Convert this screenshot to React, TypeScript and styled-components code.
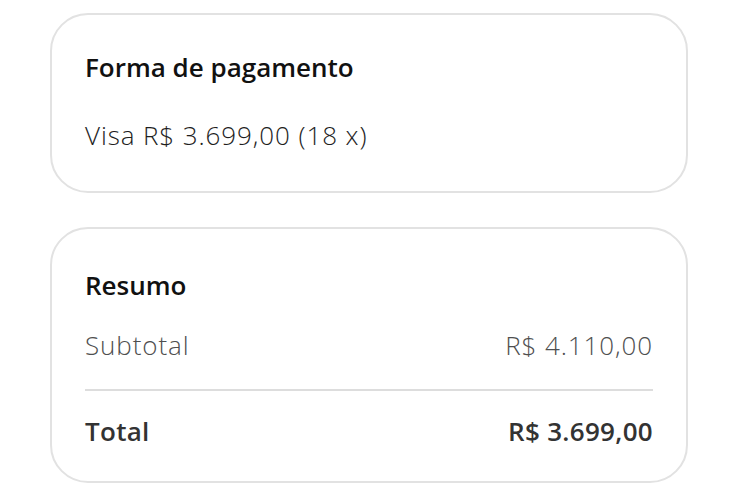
import styled, { createGlobalStyle } from 'styled-components';

const GlobalStyle = createGlobalStyle`
  body {
    margin: 0;
    background: #ffffff;
    font-family: 'Open Sans', 'Noto Sans', sans-serif;
  }
`;

const summary = [
  { label: 'Subtotal', value: 'R$ 4.110,00' },
];

const App = () => {
  return (
    <Page>
      <GlobalStyle />
      <Card $pad="36px 33px 40px">
        <Title>Forma de pagamento</Title>
        <Text $top={36}>Visa R$ 3.699,00 (18 x)</Text>
      </Card>
      <Card $pad="40px 33px 34px">
        <Title>Resumo</Title>
        {summary.map(item => (
          <Row key={item.label} $top={28}>
            <Text $muted>{item.label}</Text>
            <Text $muted>{item.value}</Text>
          </Row>
        ))}
        <Divider />
        <Row>
          <Strong>Total</Strong>
          <Strong>R$ 3.699,00</Strong>
        </Row>
      </Card>
    </Page>
  );
};

export default App;

const Page = styled.div`
  display: flex;
  flex-direction: column;
  gap: 34px;
  padding: 13px 50px;
`;

const Card = styled.section<{ $pad: string }>`
  display: flex;
  flex-direction: column;
  border: 2px solid #e2e2e2;
  border-radius: 38px;
  padding: ${p => p.$pad};
`;

const Title = styled.h2`
  margin: 0;
  font-size: 26px;
  line-height: 32px;
  font-weight: 600;
  color: #111111;
`;

const Text = styled.div<{ $top?: number; $muted?: boolean }>`
  margin-top: ${p => p.$top ?? 0}px;
  font-size: 26px;
  line-height: 32px;
  font-weight: 300;
  letter-spacing: 0.9px;
  color: ${p => (p.$muted ? '#4f4f4f' : '#1e1e1e')};
`;

const Row = styled.div<{ $top?: number }>`
  display: flex;
  justify-content: space-between;
  align-items: center;
  margin-top: ${p => p.$top ?? 0}px;
`;

const Divider = styled.hr`
  margin: 28px 0 24px;
  border: none;
  border-top: 2px solid #dddddd;
`;

const Strong = styled.div`
  font-size: 26px;
  line-height: 32px;
  font-weight: 600;
  letter-spacing: 0.3px;
  color: #333333;
`;
